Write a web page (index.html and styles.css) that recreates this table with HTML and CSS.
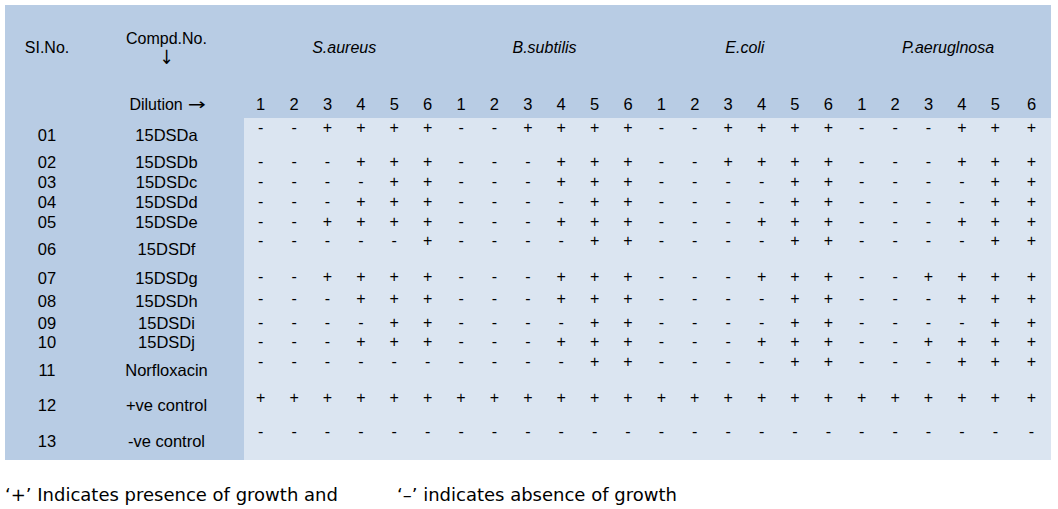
FILE: index.html
```html
<!DOCTYPE html>
<html>
<head>
<meta charset="utf-8">
<link rel="stylesheet" href="styles.css">
</head>
<body>
<div class="table">
  <div class="head">
    <div class="sl-h">SI.No.</div>
    <div class="cp-h"><div>Compd.No.</div><div class="arrow-d">↓</div></div>
    <div class="sp">S.aureus</div>
    <div class="sp">B.subtilis</div>
    <div class="sp">E.coli</div>
    <div class="sp">P.aeruglnosa</div>
    <div></div>
    <div class="dil">Dilution <span class="arrow-r">→</span></div>
    <div class="n">1</div><div class="n">2</div><div class="n">3</div><div class="n">4</div><div class="n">5</div><div class="n">6</div>
    <div class="n">1</div><div class="n">2</div><div class="n">3</div><div class="n">4</div><div class="n">5</div><div class="n">6</div>
    <div class="n">1</div><div class="n">2</div><div class="n">3</div><div class="n">4</div><div class="n">5</div><div class="n">6</div>
    <div class="n">1</div><div class="n">2</div><div class="n">3</div><div class="n">4</div><div class="n">5</div><div class="n">6</div>
  </div>
  <div class="body">
    <div class="sl">01</div><div class="cp">15DSDa</div>
    <div class="m">-</div><div class="m">-</div><div class="m">+</div><div class="m">+</div><div class="m">+</div><div class="m">+</div>
    <div class="m">-</div><div class="m">-</div><div class="m">+</div><div class="m">+</div><div class="m">+</div><div class="m">+</div>
    <div class="m">-</div><div class="m">-</div><div class="m">+</div><div class="m">+</div><div class="m">+</div><div class="m">+</div>
    <div class="m">-</div><div class="m">-</div><div class="m">-</div><div class="m">+</div><div class="m">+</div><div class="m">+</div>

    <div class="sl">02</div><div class="cp">15DSDb</div>
    <div class="m">-</div><div class="m">-</div><div class="m">-</div><div class="m">+</div><div class="m">+</div><div class="m">+</div>
    <div class="m">-</div><div class="m">-</div><div class="m">-</div><div class="m">+</div><div class="m">+</div><div class="m">+</div>
    <div class="m">-</div><div class="m">-</div><div class="m">+</div><div class="m">+</div><div class="m">+</div><div class="m">+</div>
    <div class="m">-</div><div class="m">-</div><div class="m">-</div><div class="m">+</div><div class="m">+</div><div class="m">+</div>

    <div class="sl">03</div><div class="cp">15DSDc</div>
    <div class="m">-</div><div class="m">-</div><div class="m">-</div><div class="m">-</div><div class="m">+</div><div class="m">+</div>
    <div class="m">-</div><div class="m">-</div><div class="m">-</div><div class="m">+</div><div class="m">+</div><div class="m">+</div>
    <div class="m">-</div><div class="m">-</div><div class="m">-</div><div class="m">-</div><div class="m">+</div><div class="m">+</div>
    <div class="m">-</div><div class="m">-</div><div class="m">-</div><div class="m">-</div><div class="m">+</div><div class="m">+</div>

    <div class="sl">04</div><div class="cp">15DSDd</div>
    <div class="m">-</div><div class="m">-</div><div class="m">-</div><div class="m">+</div><div class="m">+</div><div class="m">+</div>
    <div class="m">-</div><div class="m">-</div><div class="m">-</div><div class="m">-</div><div class="m">+</div><div class="m">+</div>
    <div class="m">-</div><div class="m">-</div><div class="m">-</div><div class="m">-</div><div class="m">+</div><div class="m">+</div>
    <div class="m">-</div><div class="m">-</div><div class="m">-</div><div class="m">-</div><div class="m">+</div><div class="m">+</div>

    <div class="sl">05</div><div class="cp">15DSDe</div>
    <div class="m">-</div><div class="m">-</div><div class="m">+</div><div class="m">+</div><div class="m">+</div><div class="m">+</div>
    <div class="m">-</div><div class="m">-</div><div class="m">-</div><div class="m">+</div><div class="m">+</div><div class="m">+</div>
    <div class="m">-</div><div class="m">-</div><div class="m">-</div><div class="m">+</div><div class="m">+</div><div class="m">+</div>
    <div class="m">-</div><div class="m">-</div><div class="m">-</div><div class="m">+</div><div class="m">+</div><div class="m">+</div>

    <div class="sl">06</div><div class="cp">15DSDf</div>
    <div class="m">-</div><div class="m">-</div><div class="m">-</div><div class="m">-</div><div class="m">-</div><div class="m">+</div>
    <div class="m">-</div><div class="m">-</div><div class="m">-</div><div class="m">-</div><div class="m">+</div><div class="m">+</div>
    <div class="m">-</div><div class="m">-</div><div class="m">-</div><div class="m">-</div><div class="m">+</div><div class="m">+</div>
    <div class="m">-</div><div class="m">-</div><div class="m">-</div><div class="m">-</div><div class="m">+</div><div class="m">+</div>

    <div class="sl">07</div><div class="cp">15DSDg</div>
    <div class="m">-</div><div class="m">-</div><div class="m">+</div><div class="m">+</div><div class="m">+</div><div class="m">+</div>
    <div class="m">-</div><div class="m">-</div><div class="m">-</div><div class="m">+</div><div class="m">+</div><div class="m">+</div>
    <div class="m">-</div><div class="m">-</div><div class="m">-</div><div class="m">+</div><div class="m">+</div><div class="m">+</div>
    <div class="m">-</div><div class="m">-</div><div class="m">+</div><div class="m">+</div><div class="m">+</div><div class="m">+</div>

    <div class="sl">08</div><div class="cp">15DSDh</div>
    <div class="m">-</div><div class="m">-</div><div class="m">-</div><div class="m">+</div><div class="m">+</div><div class="m">+</div>
    <div class="m">-</div><div class="m">-</div><div class="m">-</div><div class="m">+</div><div class="m">+</div><div class="m">+</div>
    <div class="m">-</div><div class="m">-</div><div class="m">-</div><div class="m">-</div><div class="m">+</div><div class="m">+</div>
    <div class="m">-</div><div class="m">-</div><div class="m">-</div><div class="m">+</div><div class="m">+</div><div class="m">+</div>

    <div class="sl">09</div><div class="cp">15DSDi</div>
    <div class="m">-</div><div class="m">-</div><div class="m">-</div><div class="m">-</div><div class="m">+</div><div class="m">+</div>
    <div class="m">-</div><div class="m">-</div><div class="m">-</div><div class="m">-</div><div class="m">+</div><div class="m">+</div>
    <div class="m">-</div><div class="m">-</div><div class="m">-</div><div class="m">-</div><div class="m">+</div><div class="m">+</div>
    <div class="m">-</div><div class="m">-</div><div class="m">-</div><div class="m">-</div><div class="m">+</div><div class="m">+</div>

    <div class="sl">10</div><div class="cp">15DSDj</div>
    <div class="m">-</div><div class="m">-</div><div class="m">-</div><div class="m">+</div><div class="m">+</div><div class="m">+</div>
    <div class="m">-</div><div class="m">-</div><div class="m">-</div><div class="m">+</div><div class="m">+</div><div class="m">+</div>
    <div class="m">-</div><div class="m">-</div><div class="m">-</div><div class="m">+</div><div class="m">+</div><div class="m">+</div>
    <div class="m">-</div><div class="m">-</div><div class="m">+</div><div class="m">+</div><div class="m">+</div><div class="m">+</div>

    <div class="sl">11</div><div class="cp">Norfloxacin</div>
    <div class="m">-</div><div class="m">-</div><div class="m">-</div><div class="m">-</div><div class="m">-</div><div class="m">-</div>
    <div class="m">-</div><div class="m">-</div><div class="m">-</div><div class="m">-</div><div class="m">+</div><div class="m">+</div>
    <div class="m">-</div><div class="m">-</div><div class="m">-</div><div class="m">-</div><div class="m">+</div><div class="m">+</div>
    <div class="m">-</div><div class="m">-</div><div class="m">-</div><div class="m">+</div><div class="m">+</div><div class="m">+</div>

    <div class="sl">12</div><div class="cp">+ve control</div>
    <div class="m">+</div><div class="m">+</div><div class="m">+</div><div class="m">+</div><div class="m">+</div><div class="m">+</div>
    <div class="m">+</div><div class="m">+</div><div class="m">+</div><div class="m">+</div><div class="m">+</div><div class="m">+</div>
    <div class="m">+</div><div class="m">+</div><div class="m">+</div><div class="m">+</div><div class="m">+</div><div class="m">+</div>
    <div class="m">+</div><div class="m">+</div><div class="m">+</div><div class="m">+</div><div class="m">+</div><div class="m">+</div>

    <div class="sl">13</div><div class="cp">-ve control</div>
    <div class="m">-</div><div class="m">-</div><div class="m">-</div><div class="m">-</div><div class="m">-</div><div class="m">-</div>
    <div class="m">-</div><div class="m">-</div><div class="m">-</div><div class="m">-</div><div class="m">-</div><div class="m">-</div>
    <div class="m">-</div><div class="m">-</div><div class="m">-</div><div class="m">-</div><div class="m">-</div><div class="m">-</div>
    <div class="m">-</div><div class="m">-</div><div class="m">-</div><div class="m">-</div><div class="m">-</div><div class="m">-</div>
  </div>
</div>
<div class="footer">
  <span>‘+’ Indicates presence of growth and</span>
  <span>‘–’ indicates absence of growth</span>
</div>
</body>
</html>
```

FILE: styles.css
```css
body {
  margin: 5px;
  font-family: "Liberation Sans", Arial, sans-serif;
  color: #000;
  background: #fff;
}

.table {
  width: 1046px;
}

.head {
  display: grid;
  grid-template-columns: 84px 155px repeat(23, 33.4px) 1fr;
  grid-template-rows: 86px 27px;
  align-items: center;
  text-align: center;
  background: #b8cce4;
  font-size: 16px;
}

.cp-h {
  line-height: 19px;
}

.arrow-d {
  font-family: "DejaVu Sans", sans-serif;
  font-size: 17px;
  display: inline-block;
  transform: scaleY(1.15);
}

.arrow-r {
  font-family: "DejaVu Sans", sans-serif;
  font-size: 16px;
  display: inline-block;
  transform: scaleX(1.35);
  margin-left: 3px;
}

.sp {
  grid-column: span 6;
  font-style: italic;
}

.n {
  font-size: 16.5px;
}

.body {
  display: grid;
  grid-template-columns: 84px 155px repeat(23, 33.4px) 1fr;
  grid-template-rows: 34px 20px 20px 20px 19px 36px 22px 24px 19px 20px 36px 34px 38px;
  background: linear-gradient(to right, #b8cce4 239px, #dbe5f1 239px);
}

.sl,
.cp {
  align-self: center;
  text-align: center;
  font-size: 16.5px;
  line-height: 18px;
}

.m {
  align-self: start;
  text-align: center;
  font-size: 16px;
  line-height: 19px;
}

.footer {
  display: grid;
  grid-template-columns: 392px auto;
  margin-top: 24px;
  font-family: "DejaVu Sans", sans-serif;
  font-size: 18px;
  line-height: 21px;
}
```
